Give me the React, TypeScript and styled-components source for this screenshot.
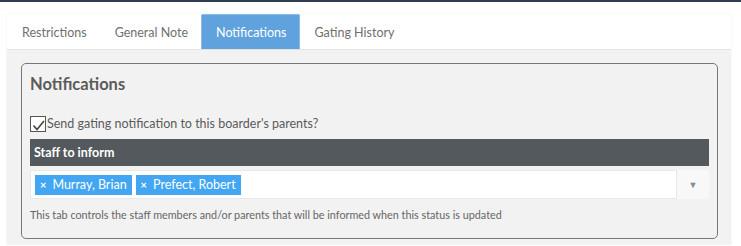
import React from 'react';
import styled, { createGlobalStyle } from 'styled-components';

const GlobalStyle = createGlobalStyle`
  html, body {
    margin: 0;
    padding: 0;
    background: #ffffff;
    font-family: Lato, "Open Sans", sans-serif;
  }
`;

const TopBar = styled.div`
  height: 2px;
  background: #2c3e50;
`;

const Page = styled.div`
  padding: 12px 10px 0 7px;
`;

const Panel = styled.div`
  background: #ffffff;
  box-shadow: 0 0 2px rgba(0, 0, 0, 0.08);
`;

const TabList = styled.div`
  display: flex;
  align-items: stretch;
  height: 35px;
  border-bottom: 1px solid #e3e3e3;
`;

const Tab = styled.div<{ $active?: boolean }>`
  display: flex;
  align-items: center;
  padding: 0 12px 0 14px;
  font-size: 12.5px;
  color: ${(p) => (p.$active ? '#ffffff' : '#6f6f6f')};
  background: ${(p) => (p.$active ? '#5fa2dd' : 'transparent')};
  border: 1px solid ${(p) => (p.$active ? '#8bbbe6' : 'transparent')};
  border-bottom: none;
  border-radius: 2px 2px 0 0;
`;

const Content = styled.div`
  background: #f2f2f2;
  padding: 13px 13px 6px 14px;
`;

const Fieldset = styled.div`
  border: 1px solid #777777;
  border-radius: 5px;
  padding: 8px 8px 17px 8px;
`;

const Heading = styled.h3`
  margin: 0 0 18px 0;
  font-size: 16.5px;
  font-weight: 700;
  color: #5b5b5b;
  line-height: 24px;
`;

const CheckRow = styled.label`
  display: flex;
  align-items: center;
  gap: 1px;
  font-size: 12.5px;
  color: #5b5b5b;
  margin-bottom: 7px;
`;

const CheckBox = styled.span`
  width: 14px;
  height: 14px;
  border: 1px solid #555555;
  background: #ffffff;
  display: flex;
  align-items: flex-end;
  justify-content: center;
  margin-top: 2px;
`;

const SectionBar = styled.div`
  background: #54595d;
  color: #ffffff;
  font-size: 12.5px;
  font-weight: 700;
  height: 27px;
  display: flex;
  align-items: center;
  padding-left: 4px;
`;

const SelectRow = styled.div`
  display: flex;
  margin-top: 4px;
  height: 29px;
`;

const SelectBox = styled.div`
  flex: 1;
  background: #ffffff;
  border: 1px solid #e8e8e8;
  display: flex;
  align-items: center;
  gap: 4px;
  padding-left: 4px;
`;

const Arrow = styled.div`
  width: 32px;
  background: #f8f8f8;
  display: flex;
  align-items: center;
  justify-content: center;
  color: #7f8c94;
  font-size: 9px;
`;

const TagChip = styled.span`
  background: #42a6f3;
  color: #ffffff;
  font-size: 12.5px;
  height: 20px;
  display: inline-flex;
  align-items: center;
  padding: 0 5px;
  gap: 6px;
`;

const TagX = styled.span`
  font-size: 11px;
  font-weight: 700;
`;

const Help = styled.div`
  margin-top: 9px;
  font-size: 10.8px;
  color: #666666;
`;

const tags = ['Murray, Brian', 'Prefect, Robert'];

export default function App() {
  return (
    <>
      <GlobalStyle />
      <TopBar />
      <Page>
        <Panel>
          <TabList>
            <Tab>Restrictions</Tab>
            <Tab>General Note</Tab>
            <Tab $active>Notifications</Tab>
            <Tab>Gating History</Tab>
          </TabList>
          <Content>
            <Fieldset>
              <Heading>Notifications</Heading>
              <CheckRow>
                <CheckBox>
                  <svg width="13" height="11" viewBox="0 0 13 11">
                    <path d="M1.5 5.5 L5 9.5 L12 1" fill="none" stroke="#444" strokeWidth="1.6" />
                  </svg>
                </CheckBox>
                Send gating notification to this boarder's parents?
              </CheckRow>
              <SectionBar>Staff to inform</SectionBar>
              <SelectRow>
                <SelectBox>
                  {tags.map((t) => (
                    <TagChip key={t}>
                      <TagX>×</TagX>
                      {t}
                    </TagChip>
                  ))}
                </SelectBox>
                <Arrow>▼</Arrow>
              </SelectRow>
              <Help>This tab controls the staff members and/or parents that will be informed when this status is updated</Help>
            </Fieldset>
          </Content>
        </Panel>
      </Page>
    </>
  );
}
